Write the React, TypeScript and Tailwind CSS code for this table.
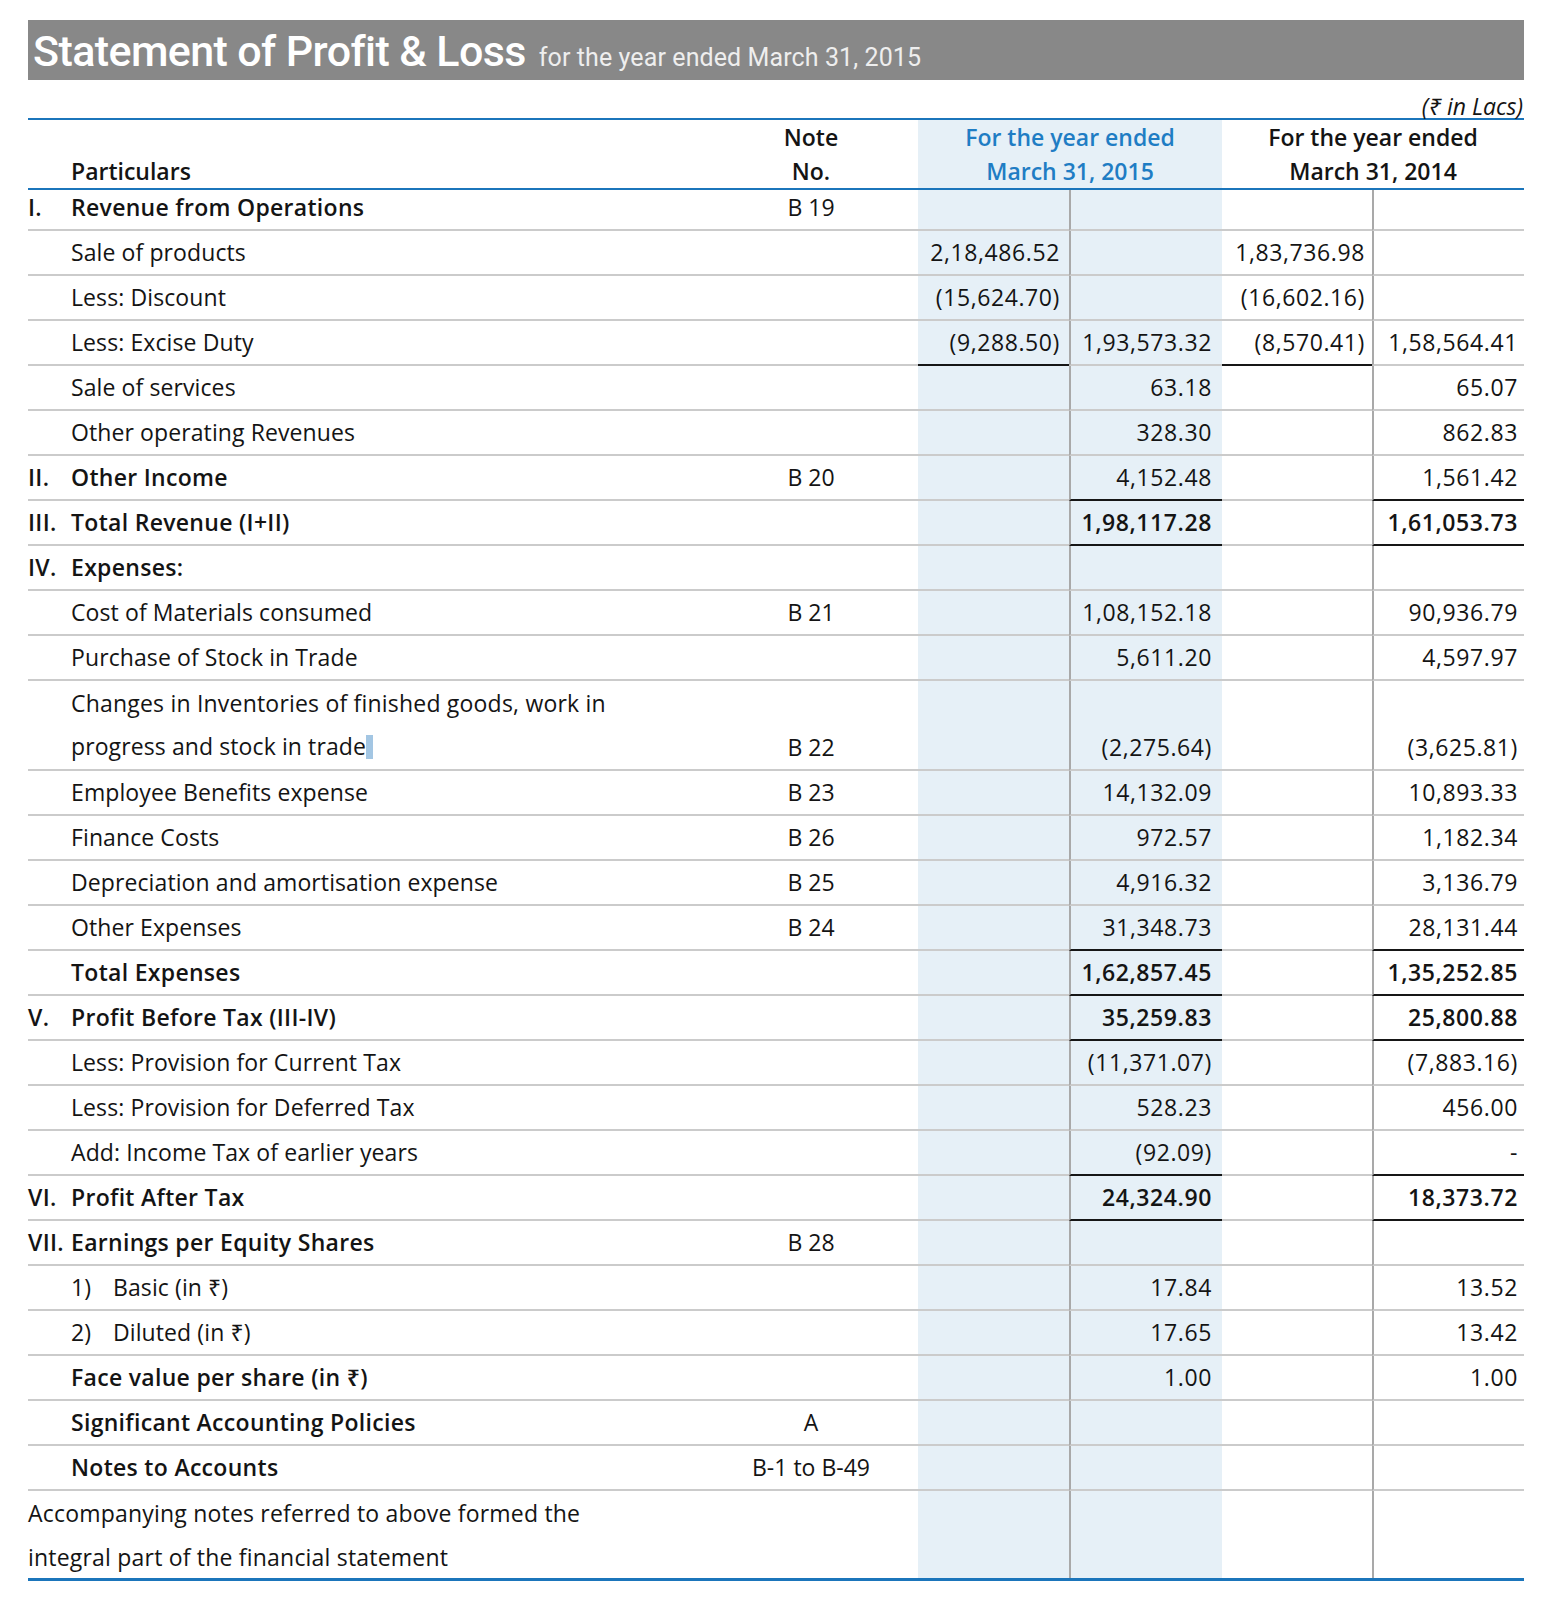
import React from 'react';

type Row = {
  num?: string;
  label: React.ReactNode;
  sub?: string;
  bold?: boolean;
  note?: string;
  a?: string;
  b?: string;
  c?: string;
  d?: string;
  numBold?: boolean;
  lineAC?: boolean;
  lineBD?: boolean;
  tall?: boolean;
  first?: boolean;
};

const rows: Row[] = [
  { num: 'I.', label: 'Revenue from Operations', bold: true, note: 'B 19', first: true },
  { label: 'Sale of products', a: '2,18,486.52', c: '1,83,736.98' },
  { label: 'Less: Discount', a: '(15,624.70)', c: '(16,602.16)' },
  { label: 'Less: Excise Duty', a: '(9,288.50)', b: '1,93,573.32', c: '(8,570.41)', d: '1,58,564.41', lineAC: true },
  { label: 'Sale of services', b: '63.18', d: '65.07' },
  { label: 'Other operating Revenues', b: '328.30', d: '862.83' },
  { num: 'II.', label: 'Other Income', bold: true, note: 'B 20', b: '4,152.48', d: '1,561.42', lineBD: true },
  { num: 'III.', label: 'Total Revenue (I+II)', bold: true, b: '1,98,117.28', d: '1,61,053.73', numBold: true, lineBD: true },
  { num: 'IV.', label: 'Expenses:', bold: true },
  { label: 'Cost of Materials consumed', note: 'B 21', b: '1,08,152.18', d: '90,936.79' },
  { label: 'Purchase of Stock in Trade', b: '5,611.20', d: '4,597.97' },
  {
    label: (
      <>
        <span className="block leading-[44px] tracking-[0.2px]">Changes in Inventories of finished goods, work in</span>
        <span className="flex h-[43px] items-center">
          progress and stock in trade
          <span className="inline-block h-[24px] w-[7px] bg-[#a3c6e3]" />
        </span>
      </>
    ),
    note: 'B 22',
    b: '(2,275.64)',
    d: '(3,625.81)',
    tall: true,
  },
  { label: 'Employee Benefits expense', note: 'B 23', b: '14,132.09', d: '10,893.33' },
  { label: 'Finance Costs', note: 'B 26', b: '972.57', d: '1,182.34' },
  { label: 'Depreciation and amortisation expense', note: 'B 25', b: '4,916.32', d: '3,136.79' },
  { label: 'Other Expenses', note: 'B 24', b: '31,348.73', d: '28,131.44', lineBD: true },
  { label: 'Total Expenses', bold: true, b: '1,62,857.45', d: '1,35,252.85', numBold: true, lineBD: true },
  { num: 'V.', label: 'Profit Before Tax (III-IV)', bold: true, b: '35,259.83', d: '25,800.88', numBold: true, lineBD: true },
  { label: 'Less: Provision for Current Tax', b: '(11,371.07)', d: '(7,883.16)' },
  { label: 'Less: Provision for Deferred Tax', b: '528.23', d: '456.00' },
  { label: 'Add: Income Tax of earlier years', b: '(92.09)', d: '-', lineBD: true },
  { num: 'VI.', label: 'Profit After Tax', bold: true, b: '24,324.90', d: '18,373.72', numBold: true, lineBD: true },
  { num: 'VII.', label: 'Earnings per Equity Shares', bold: true, note: 'B 28' },
  { sub: '1)', label: 'Basic (in ₹)', b: '17.84', d: '13.52' },
  { sub: '2)', label: 'Diluted (in ₹)', b: '17.65', d: '13.42' },
  { label: 'Face value per share (in ₹)', bold: true, b: '1.00', d: '1.00' },
  { label: 'Significant Accounting Policies', bold: true, note: 'A' },
  { label: 'Notes to Accounts', bold: true, note: 'B-1 to B-49' },
];

const grid = 'grid grid-cols-[676px_214px_151px_153px_150px_152px]';

function Cell({
  children,
  className,
  black,
  tall,
  first,
}: {
  children?: React.ReactNode;
  className?: string;
  black?: boolean;
  tall?: boolean;
  first?: boolean;
}) {
  return (
    <div
      className={`flex flex-col justify-end border-b-2 ${black ? 'border-b-[#161616]' : 'border-b-[#cbcbcb]'} ${
        tall ? 'h-[90px]' : first ? 'h-[41px] pb-[4px]' : 'h-[45px]'
      } ${className ?? ''}`}
    >
      <div className={`flex items-center ${first ? 'h-[37px]' : 'h-[43px]'}`}>{children}</div>
    </div>
  );
}

function DataRow({ r }: { r: Row }) {
  const num = r.numBold ? 'font-semibold' : '';
  return (
    <div className={grid}>
      <div
        className={`flex border-b-2 border-b-[#cbcbcb] ${r.tall ? 'h-[90px]' : r.first ? 'h-[41px] pb-[4px]' : 'h-[45px]'} ${
          r.bold ? 'font-semibold tracking-[0.3px]' : 'tracking-[0.1px]'
        }`}
      >
        {r.tall ? (
          <div className="flex flex-col pl-[43px]">{r.label}</div>
        ) : (
          <div className="flex items-center">
            <span className="w-[43px]">{r.num}</span>
            {r.sub && <span className="w-[42px]">{r.sub}</span>}
            <span>{r.label}</span>
          </div>
        )}
      </div>
      <Cell tall={r.tall} first={r.first}>
        <span className="w-full text-center">{r.note}</span>
      </Cell>
      <Cell tall={r.tall} first={r.first} black={r.lineAC} className="bg-[#e6f0f7]">
        <span className="w-full pr-[9px] text-right tracking-[0.6px]">{r.a}</span>
      </Cell>
      <Cell tall={r.tall} first={r.first} black={r.lineBD} className="border-l-2 border-l-[#a9a9a9] bg-[#e6f0f7]">
        <span className={`w-full pr-[10px] text-right tracking-[0.6px] ${num}`}>{r.b}</span>
      </Cell>
      <Cell tall={r.tall} first={r.first} black={r.lineAC}>
        <span className="w-full pr-[7px] text-right tracking-[0.6px]">{r.c}</span>
      </Cell>
      <Cell tall={r.tall} first={r.first} black={r.lineBD} className="border-l-2 border-l-[#a9a9a9]">
        <span className={`w-full pr-[6px] text-right tracking-[0.6px] ${num}`}>{r.d}</span>
      </Cell>
    </div>
  );
}

export default function App() {
  return (
    <div className="h-[1612px] w-[1554px] bg-white pl-[28px] pt-[20px] font-['Open_Sans','Noto_Sans',sans-serif] text-[23px] text-[#141414]">
      <div className="w-[1496px]">
        {/* Title bar */}
        <div className="flex h-[60px] items-baseline gap-[13px] bg-[#888888] pl-[5px] pt-[10px] font-['Roboto',sans-serif] leading-none text-white">
          <span className="text-[43px] font-medium tracking-[-0.6px]">Statement of Profit &amp; Loss</span>
          <span className="text-[25px] tracking-[0.1px] text-[#eeeeee]">for the year ended March 31, 2015</span>
        </div>

        <div className="flex h-[38px] items-end justify-end pr-[1px] text-[23px] italic leading-none">(₹ in Lacs)</div>

        {/* Column headings */}
        <div className={`${grid} border-y-2 border-[#1b75bb] font-semibold leading-[34px]`}>
          <div className="flex flex-col justify-end pl-[43px]">Particulars</div>
          <div className="flex flex-col items-center">
            <span>Note</span>
            <span>No.</span>
          </div>
          <div className="col-span-2 flex flex-col items-center bg-[#e6f0f7] text-[#1f7dc4]">
            <span>For the year ended</span>
            <span>March 31, 2015</span>
          </div>
          <div className="col-span-2 flex flex-col items-center">
            <span>For the year ended</span>
            <span>March 31, 2014</span>
          </div>
        </div>

        {rows.map((r, i) => (
          <DataRow key={i} r={r} />
        ))}

        {/* Footer note */}
        <div className={`${grid} border-b-[3px] border-[#1b75bb]`}>
          <div className="col-span-2 h-[87px] leading-[44px] tracking-[0.2px]">
            <div>Accompanying notes referred to above formed the</div>
            <div>integral part of the financial statement</div>
          </div>
          <div className="bg-[#e6f0f7]" />
          <div className="border-l-2 border-l-[#a9a9a9] bg-[#e6f0f7]" />
          <div />
          <div className="border-l-2 border-l-[#a9a9a9]" />
        </div>
      </div>
    </div>
  );
}
